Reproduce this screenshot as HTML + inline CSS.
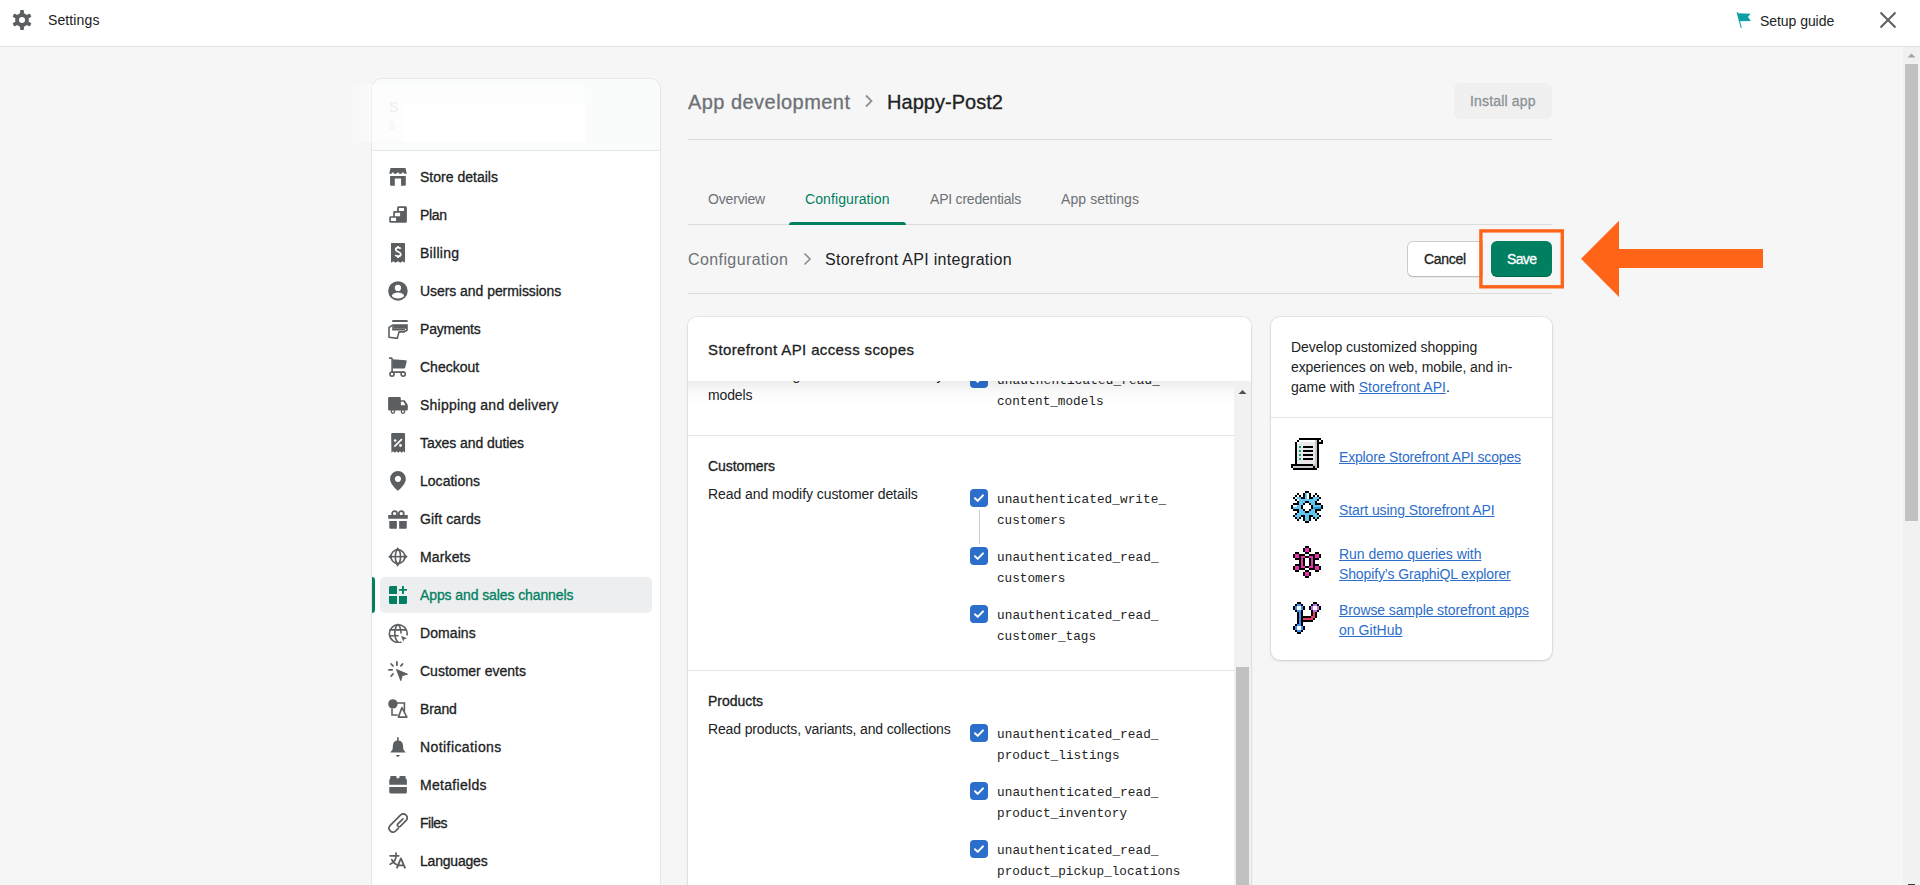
<!DOCTYPE html>
<html><head><meta charset="utf-8"><title>Settings</title>
<style>
html,body{margin:0;padding:0}
body{width:1920px;height:885px;overflow:hidden;position:relative;background:#f6f6f7;font-family:"Liberation Sans",sans-serif}
.t{position:absolute;white-space:nowrap}
svg{display:block}
</style></head><body>
<div style="position:absolute;left:0;top:0;width:1920px;height:46px;background:#fff;border-bottom:1px solid #e1e3e5"></div>
<svg style="position:absolute;left:12px;top:10px" width="20" height="20" viewBox="0 0 20 20"><g fill="#5c5f62"><circle cx="10" cy="10" r="6.9"/><rect x="8.1" y="0.1" width="3.8" height="5" rx="0.7" transform="rotate(0 10 10)"/><rect x="8.1" y="0.1" width="3.8" height="5" rx="0.7" transform="rotate(60 10 10)"/><rect x="8.1" y="0.1" width="3.8" height="5" rx="0.7" transform="rotate(120 10 10)"/><rect x="8.1" y="0.1" width="3.8" height="5" rx="0.7" transform="rotate(180 10 10)"/><rect x="8.1" y="0.1" width="3.8" height="5" rx="0.7" transform="rotate(240 10 10)"/><rect x="8.1" y="0.1" width="3.8" height="5" rx="0.7" transform="rotate(300 10 10)"/></g><circle cx="10" cy="10" r="3.05" fill="#fff"/></svg>
<div id="t1" class="t" style="left:48px;top:11.15px;font-size:14px;line-height:18px;color:#202223;font-weight:400;font-family:'Liberation Sans', sans-serif;letter-spacing:0.117px;">Settings</div>
<svg style="position:absolute;left:1736px;top:12px" width="16" height="17" viewBox="0 0 16 17"><path fill="#0e9ea8" d="M0.6 0.2h1.4l0.2 1 12.4 0.6-2.6 3.3 2.9 3.8-11 0.4 1.9 6.4H4.6z"/></svg>
<div id="t2" class="t" style="left:1760px;top:12.15px;font-size:14px;line-height:18px;color:#202223;font-weight:400;font-family:'Liberation Sans', sans-serif;letter-spacing:-0.054px;">Setup guide</div>
<svg style="position:absolute;left:1878px;top:10px" width="20" height="20" viewBox="0 0 20 20"><path stroke="#5c5f62" stroke-width="2" d="M2.5 2.5L17.5 17.5M17.5 2.5L2.5 17.5"/></svg>
<div style="position:absolute;left:1903px;top:47px;width:17px;height:838px;background:#f1f1f1"></div>
<svg style="position:absolute;left:1903px;top:47px" width="17" height="17"><path fill="#a3a3a3" d="M4.5 10.5h8l-4-4z"/></svg>
<div style="position:absolute;left:1905px;top:64px;width:13px;height:457px;background:#c1c1c1"></div>
<div style="position:absolute;left:1908px;top:884px;width:7px;height:1px;background:#3a3a3a"></div>
<div style="position:absolute;left:372px;top:79px;width:288px;height:900px;background:#fff;border-radius:10px;box-shadow:0 0 0 1px rgba(0,0,0,0.05),0 1px 2px rgba(0,0,0,0.07);overflow:hidden"><div style="position:absolute;left:0;top:0;width:288px;height:71px;background:#fafbfb;border-bottom:1px solid #e4e5e7"></div><div style="position:absolute;left:32px;top:25px;width:181px;height:38px;background:#fff"></div></div>
<div style="position:absolute;left:345px;top:84px;width:240px;height:58px;background:linear-gradient(90deg,rgba(255,255,255,0) 0,rgba(255,255,255,0.5) 30px,rgba(255,255,255,0.5) 100%)"></div>
<div id="t3" class="t" style="left:389px;top:97.65px;font-size:14px;line-height:18px;color:#eeeff0;font-weight:400;font-family:'Liberation Sans', sans-serif;">S</div>
<div id="t4" class="t" style="left:388.5px;top:120.03px;font-size:10px;line-height:12px;color:#f0f1f2;font-weight:400;font-family:'Liberation Sans', sans-serif;">S</div>
<div style="position:absolute;left:380px;top:577px;width:272px;height:36px;background:#edeeef;border-radius:5px"></div>
<div style="position:absolute;left:372px;top:577px;width:3px;height:36px;background:#008060;border-radius:0 3px 3px 0"></div>
<svg style="position:absolute;left:388px;top:167px" width="20" height="20" viewBox="0 0 20 20" ><path fill="#5c5f62" d="M2.5 1H17.5L18.75 6.8H16.15A1.2 1.2 0 0 0 13.75 6.8H11.1A1.2 1.2 0 0 0 8.7 6.8H6.1A1.2 1.2 0 0 0 3.7 6.8H1.25Z"/><path fill="#5c5f62" d="M2.07 9H17.8V17.75A1 1 0 0 1 16.8 18.75H13.05V11.56H6.8V18.75H3.07A1 1 0 0 1 2.07 17.75Z"/></svg>
<div id="t5" class="t" style="left:420px;top:168.15px;font-size:14px;line-height:18px;color:#202223;font-weight:400;font-family:'Liberation Sans', sans-serif;letter-spacing:0.014px;-webkit-text-stroke:0.3px currentColor;">Store details</div>
<svg style="position:absolute;left:388px;top:205px" width="20" height="20" viewBox="0 0 20 20" ><path fill="#5c5f62" fill-rule="evenodd" d="M2.7 11.2H5.2V7.5Q5.2 6.1 6.6 6.1H9.1V2.7Q9.1 1.25 10.5 1.25H17.4Q18.9 1.25 18.9 2.7V16.2Q18.9 17.7 17.4 17.7H2.7Q1.25 17.7 1.25 16.2V12.6Q1.25 11.2 2.7 11.2Z M10.9 2.9H16V6.1H10.9Z M6.9 7.8H12.1V11.2H6.9Z M2.9 12.8H8V16H2.9Z"/></svg>
<div id="t6" class="t" style="left:420px;top:206.15px;font-size:14px;line-height:18px;color:#202223;font-weight:400;font-family:'Liberation Sans', sans-serif;letter-spacing:-0.345px;-webkit-text-stroke:0.3px currentColor;">Plan</div>
<svg style="position:absolute;left:388px;top:243px" width="20" height="20" viewBox="0 0 20 20" ><path fill="#5c5f62" d="M3 0.5a0.6 0.6 0 0 1 0.6-0.5h12.8a0.6 0.6 0 0 1 0.6 0.5v19.3l-2.3-1.6-2.3 1.6-2.4-1.6-2.4 1.6-2.3-1.6L3 19.8z"/><path fill="none" stroke="#fff" stroke-width="1.8" d="M12.7 5.8C12.1 5 11.3 4.7 10.1 4.7 8.6 4.7 7.7 5.5 7.7 6.6 7.7 9.2 12.8 8.3 12.8 11.2 12.8 12.4 11.7 13.2 10.1 13.2 8.9 13.2 7.9 12.8 7.3 12M10.1 3V4.7M10.1 13.2V15"/></svg>
<div id="t7" class="t" style="left:420px;top:244.15px;font-size:14px;line-height:18px;color:#202223;font-weight:400;font-family:'Liberation Sans', sans-serif;letter-spacing:0.273px;-webkit-text-stroke:0.3px currentColor;">Billing</div>
<svg style="position:absolute;left:388px;top:281px" width="20" height="20" viewBox="0 0 20 20" ><circle cx="9.93" cy="9.93" r="9.76" fill="#5c5f62"/><circle cx="9.93" cy="6.95" r="3.1" fill="#fff"/><ellipse cx="9.93" cy="14.5" rx="6" ry="3" fill="#fff"/></svg>
<div id="t8" class="t" style="left:420px;top:282.15px;font-size:14px;line-height:18px;color:#202223;font-weight:400;font-family:'Liberation Sans', sans-serif;letter-spacing:-0.054px;-webkit-text-stroke:0.3px currentColor;">Users and permissions</div>
<svg style="position:absolute;left:388px;top:319px" width="20" height="20" viewBox="0 0 20 20" ><path fill="#5c5f62" d="M4.6 1.1h14.6l0.6 0.8v1H4.1v-1z"/><path fill="#5c5f62" d="M4.1 5.2H19.8V11.6L18.2 12.4V9.7H5.8V6.6z"/><path fill="none" stroke="#5c5f62" stroke-width="1.6" stroke-linejoin="round" d="M5 6L1 8.4V18.3L9.3 19.4L11 12.9H16.3L19 11"/><path fill="none" stroke="#5c5f62" stroke-width="1.6" d="M5 6V10.6H17"/></svg>
<div id="t9" class="t" style="left:420px;top:320.15px;font-size:14px;line-height:18px;color:#202223;font-weight:400;font-family:'Liberation Sans', sans-serif;letter-spacing:-0.208px;-webkit-text-stroke:0.3px currentColor;">Payments</div>
<svg style="position:absolute;left:388px;top:357px" width="20" height="20" viewBox="0 0 20 20" ><path fill="none" stroke="#5c5f62" stroke-width="1.6" stroke-linecap="round" d="M1.6 1.1H3.3a0.8 0.8 0 0 1 0.8 0.8V15.1H16"/><path fill="#5c5f62" d="M4.5 2.2L17.8 3.2a1 1 0 0 1 0.9 1.2L17.2 10.6a1.2 1.2 0 0 1-1.2 1H4.5z"/><circle cx="4" cy="17.1" r="2.1" fill="none" stroke="#5c5f62" stroke-width="1.6"/><circle cx="15.2" cy="17.1" r="2.1" fill="none" stroke="#5c5f62" stroke-width="1.6"/></svg>
<div id="t10" class="t" style="left:420px;top:358.15px;font-size:14px;line-height:18px;color:#202223;font-weight:400;font-family:'Liberation Sans', sans-serif;letter-spacing:0.007px;-webkit-text-stroke:0.3px currentColor;">Checkout</div>
<svg style="position:absolute;left:388px;top:395px" width="20" height="20" viewBox="0 0 20 20" ><path fill="#5c5f62" fill-rule="evenodd" d="M1.2 2.1H11.7a1.1 1.1 0 0 1 1.1 1.1V5.3H16.7L19.8 9.9V14.5a1.1 1.1 0 0 1-1.1 1.1H1.2a1.1 1.1 0 0 1-1.1-1.1V3.2a1.1 1.1 0 0 1 1.1-1.1z M12.9 6.7V10.2H17.3L15.6 6.7z"/><circle cx="4.9" cy="16.6" r="2.3" fill="#5c5f62" stroke="#fff" stroke-width="0"/><circle cx="4.9" cy="16.6" r="1" fill="#fff"/><circle cx="14.95" cy="16.6" r="2.3" fill="#5c5f62"/><circle cx="14.95" cy="16.6" r="1" fill="#fff"/></svg>
<div id="t11" class="t" style="left:420px;top:396.15px;font-size:14px;line-height:18px;color:#202223;font-weight:400;font-family:'Liberation Sans', sans-serif;letter-spacing:0.221px;-webkit-text-stroke:0.3px currentColor;">Shipping and delivery</div>
<svg style="position:absolute;left:388px;top:433px" width="20" height="20" viewBox="0 0 20 20" ><path fill="#5c5f62" d="M3.15 1.2a1.2 1.2 0 0 1 1.2-1.2h11.5a1.2 1.2 0 0 1 1.2 1.2V19.7l-1.7-1.5-1.7 1.5-1.7-1.5-1.7 1.5-1.7-1.5-1.7 1.5-1.7-1.5-1.7 1.5z"/><circle cx="7.2" cy="7.5" r="1.3" fill="#fff"/><circle cx="12.5" cy="12.5" r="1.4" fill="#fff"/><path stroke="#fff" stroke-width="1.7" stroke-linecap="square" d="M6.9 13.1L13.3 6.8"/></svg>
<div id="t12" class="t" style="left:420px;top:434.15px;font-size:14px;line-height:18px;color:#202223;font-weight:400;font-family:'Liberation Sans', sans-serif;letter-spacing:-0.071px;-webkit-text-stroke:0.3px currentColor;">Taxes and duties</div>
<svg style="position:absolute;left:388px;top:471px" width="20" height="20" viewBox="0 0 20 20" ><path fill="#5c5f62" fill-rule="evenodd" d="M9.93 0.05a7.85 7.85 0 0 1 7.85 7.85c0 4.3-4.6 9.1-7.85 11.8C6.7 17 2.08 12.2 2.08 7.9A7.85 7.85 0 0 1 9.93 0.05z M9.93 4.8a3.1 3.1 0 1 0 0.01 0z"/></svg>
<div id="t13" class="t" style="left:420px;top:472.15px;font-size:14px;line-height:18px;color:#202223;font-weight:400;font-family:'Liberation Sans', sans-serif;letter-spacing:0.020px;-webkit-text-stroke:0.3px currentColor;">Locations</div>
<svg style="position:absolute;left:388px;top:509px" width="20" height="20" viewBox="0 0 20 20" ><path fill="#5c5f62" d="M0.7 6.1H19.3a0.5 0.5 0 0 1 0.5 0.5V9.8H0.2V6.6a0.5 0.5 0 0 1 0.5-0.5z"/><circle cx="6.6" cy="4.6" r="2.5" fill="none" stroke="#5c5f62" stroke-width="1.7"/><circle cx="13.3" cy="4.6" r="2.5" fill="none" stroke="#5c5f62" stroke-width="1.7"/><path fill="#5c5f62" d="M1.25 12.1H8.85V19.7H2.3a1 1 0 0 1-1-1z M11.15 12.1H18.75V18.7a1 1 0 0 1-1 1H11.15z"/></svg>
<div id="t14" class="t" style="left:420px;top:510.15px;font-size:14px;line-height:18px;color:#202223;font-weight:400;font-family:'Liberation Sans', sans-serif;letter-spacing:0.098px;-webkit-text-stroke:0.3px currentColor;">Gift cards</div>
<svg style="position:absolute;left:388px;top:547px" width="20" height="20" viewBox="0 0 20 20" ><circle cx="9.93" cy="9.66" r="6.9" fill="none" stroke="#5c5f62" stroke-width="1.6"/><ellipse cx="9.93" cy="9.66" rx="2.6" ry="6.9" fill="none" stroke="#5c5f62" stroke-width="1.6"/><path stroke="#5c5f62" stroke-width="1.6" d="M2 9.66H18"/><path fill="#5c5f62" d="M9.66 0.2L12.2 3.3H7.1z M9.66 19.7L12.2 16H7.1z M0.17 9.66L3.3 7.1V12.2z M19.7 9.66L16.6 7.1V12.2z"/></svg>
<div id="t15" class="t" style="left:420px;top:548.15px;font-size:14px;line-height:18px;color:#202223;font-weight:400;font-family:'Liberation Sans', sans-serif;letter-spacing:0.134px;-webkit-text-stroke:0.3px currentColor;">Markets</div>
<svg style="position:absolute;left:388px;top:585px" width="20" height="20" viewBox="0 0 20 20" ><path fill="#008060" d="M2.5 1H9V9H1V2.5A1.5 1.5 0 0 1 2.5 1z M1 11H9V18.9H2.5A1.5 1.5 0 0 1 1 17.4z M11 11H19V17.4A1.5 1.5 0 0 1 17.5 18.9H11z"/><path stroke="#008060" stroke-width="1.9" d="M14.95 1V8.9M11 4.9H19"/></svg>
<div id="t16" class="t" style="left:420px;top:586.15px;font-size:14px;line-height:18px;color:#008060;font-weight:400;font-family:'Liberation Sans', sans-serif;letter-spacing:-0.098px;-webkit-text-stroke:0.3px currentColor;">Apps and sales channels</div>
<svg style="position:absolute;left:388px;top:623px" width="20" height="20" viewBox="0 0 20 20" ><path fill="none" stroke="#5c5f62" stroke-width="1.6" d="M13.4 19A8.9 8.9 0 1 1 19 12.4"/><path fill="none" stroke="#5c5f62" stroke-width="1.6" d="M9.9 1.1C7.6 3.3 6.8 6.8 6.8 10S7.5 16.8 9.9 18.8 M9.9 1.1C12.3 3.3 13 6.4 13 10.3V10.6"/><path stroke="#5c5f62" stroke-width="1.6" d="M1.5 6.9H18.3M1.5 12.8H10.6"/><path fill="#5c5f62" d="M13.05 12.8L19 15.35 15.8 16.4 15.35 18.9z"/></svg>
<div id="t17" class="t" style="left:420px;top:624.15px;font-size:14px;line-height:18px;color:#202223;font-weight:400;font-family:'Liberation Sans', sans-serif;letter-spacing:0.074px;-webkit-text-stroke:0.3px currentColor;">Domains</div>
<svg style="position:absolute;left:388px;top:661px" width="20" height="20" viewBox="0 0 20 20" ><path stroke="#5c5f62" stroke-width="1.8" stroke-linecap="round" d="M8.85 0.9V4.2M3.2 3L5 4.9M14.6 3L12.9 4.9M0.9 8.85H4.2M3.2 15L5 13"/><path fill="#5c5f62" stroke="#5c5f62" stroke-width="1" stroke-linejoin="round" d="M8.5 8.5L19.5 13.2L14.2 14.6L12.8 19.6z"/></svg>
<div id="t18" class="t" style="left:420px;top:662.15px;font-size:14px;line-height:18px;color:#202223;font-weight:400;font-family:'Liberation Sans', sans-serif;letter-spacing:0.012px;-webkit-text-stroke:0.3px currentColor;">Customer events</div>
<svg style="position:absolute;left:388px;top:699px" width="20" height="20" viewBox="0 0 20 20" ><path fill="none" stroke="#5c5f62" stroke-width="1.6" d="M5 4H16.4V12.5M4 9.5V16H9.8"/><circle cx="4.9" cy="4.9" r="4.7" fill="#5c5f62"/><path fill="none" stroke="#5c5f62" stroke-width="1.6" stroke-linejoin="round" d="M13.9 8.6L10.4 18.1H18.9z"/></svg>
<div id="t19" class="t" style="left:420px;top:700.15px;font-size:14px;line-height:18px;color:#202223;font-weight:400;font-family:'Liberation Sans', sans-serif;letter-spacing:-0.115px;-webkit-text-stroke:0.3px currentColor;">Brand</div>
<svg style="position:absolute;left:388px;top:737px" width="20" height="20" viewBox="0 0 20 20" ><path fill="#5c5f62" d="M9.1 0.2H10.7V3.4C13.4 3.8 14.9 5.6 15 8.2L15.3 12.2 17.6 15.4H2.3L4.6 12.2 4.9 8.2C5 5.6 6.5 3.8 9.1 3.4z"/><path fill="#5c5f62" d="M8 17.9H11.8C11.5 19 10.8 19.7 9.9 19.7S8.3 19 8 17.9z"/></svg>
<div id="t20" class="t" style="left:420px;top:738.15px;font-size:14px;line-height:18px;color:#202223;font-weight:400;font-family:'Liberation Sans', sans-serif;letter-spacing:0.421px;-webkit-text-stroke:0.3px currentColor;">Notifications</div>
<svg style="position:absolute;left:388px;top:775px" width="20" height="20" viewBox="0 0 20 20" ><path fill="#5c5f62" d="M3.2 1.1H7.6a1 1 0 0 1 1 1V3.3H11.3V2.1a1 1 0 0 1 1-1H16.7a1 1 0 0 1 1 1V4h0.2a1 1 0 0 1 1 1V9.8H1.25V5a1 1 0 0 1 1-1H2.2V2.1a1 1 0 0 1 1-1z"/><path fill="#5c5f62" d="M1.25 12.1H18.9V17.1a1.5 1.5 0 0 1-1.5 1.5H2.75a1.5 1.5 0 0 1-1.5-1.5z"/></svg>
<div id="t21" class="t" style="left:420px;top:776.15px;font-size:14px;line-height:18px;color:#202223;font-weight:400;font-family:'Liberation Sans', sans-serif;letter-spacing:0.298px;-webkit-text-stroke:0.3px currentColor;">Metafields</div>
<svg style="position:absolute;left:388px;top:813px" width="20" height="20" viewBox="0 0 20 20" ><path fill="none" stroke="#5c5f62" stroke-width="1.7" stroke-linecap="round" d="M10.3 15.35L7.5 18.1A3.9 3.9 0 0 1 2 12.6L12.7 1.9A3.9 3.9 0 0 1 18.2 7.4L12.3 13.3A1.7 1.7 0 0 1 9.9 10.9L14.9 5.9"/></svg>
<div id="t22" class="t" style="left:420px;top:814.15px;font-size:14px;line-height:18px;color:#202223;font-weight:400;font-family:'Liberation Sans', sans-serif;letter-spacing:-0.491px;-webkit-text-stroke:0.3px currentColor;">Files</div>
<svg style="position:absolute;left:388px;top:851px" width="20" height="20" viewBox="0 0 20 20" ><path fill="none" stroke="#5c5f62" stroke-width="1.7" stroke-linecap="round" d="M2.1 4.8H10.7M8 2.1V4.8C8 8.5 6.5 11.5 2.1 13.2M3.8 8.6C5 11.5 7.5 13.5 10.9 14.3"/><path fill="none" stroke="#5c5f62" stroke-width="1.8" stroke-linejoin="round" d="M8.7 17.4L12.9 7.4 17.2 17.4M10.2 14.4H15.8"/></svg>
<div id="t23" class="t" style="left:420px;top:852.15px;font-size:14px;line-height:18px;color:#202223;font-weight:400;font-family:'Liberation Sans', sans-serif;letter-spacing:-0.199px;-webkit-text-stroke:0.3px currentColor;">Languages</div>
<div id="t24" class="t" style="left:688px;top:89.57px;font-size:20px;line-height:25px;color:#6d7175;font-weight:400;font-family:'Liberation Sans', sans-serif;letter-spacing:0.452px;-webkit-text-stroke:0.3px currentColor;">App development</div>
<svg style="position:absolute;left:862px;top:93px" width="14" height="16" viewBox="0 0 14 16"><path fill="none" stroke="#8c9196" stroke-width="1.8" d="M4 2.5L9.5 8 4 13.5"/></svg>
<div id="t25" class="t" style="left:887px;top:89.57px;font-size:20px;line-height:25px;color:#202223;font-weight:400;font-family:'Liberation Sans', sans-serif;letter-spacing:0.038px;-webkit-text-stroke:0.3px currentColor;">Happy-Post2</div>
<div style="position:absolute;left:1454px;top:83px;width:98px;height:36px;background:#f0f0f0;border-radius:6px"></div>
<div id="t26" class="t" style="left:1470px;top:92.15px;font-size:14px;line-height:18px;color:#8c9196;font-weight:400;font-family:'Liberation Sans', sans-serif;letter-spacing:0.167px;-webkit-text-stroke:0.3px currentColor;">Install app</div>
<div style="position:absolute;left:688px;top:139px;width:864px;height:1px;background:#dcdcdc"></div>
<div id="t27" class="t" style="left:708px;top:189.85px;font-size:14px;line-height:18px;color:#6d7175;font-weight:400;font-family:'Liberation Sans', sans-serif;letter-spacing:-0.166px;">Overview</div>
<div id="t28" class="t" style="left:805px;top:189.85px;font-size:14px;line-height:18px;color:#008060;font-weight:400;font-family:'Liberation Sans', sans-serif;letter-spacing:0.101px;">Configuration</div>
<div id="t29" class="t" style="left:930px;top:189.85px;font-size:14px;line-height:18px;color:#6d7175;font-weight:400;font-family:'Liberation Sans', sans-serif;letter-spacing:-0.212px;">API credentials</div>
<div id="t30" class="t" style="left:1061px;top:189.85px;font-size:14px;line-height:18px;color:#6d7175;font-weight:400;font-family:'Liberation Sans', sans-serif;letter-spacing:0.086px;">App settings</div>
<div style="position:absolute;left:688px;top:224px;width:864px;height:1px;background:#dcdcdc"></div>
<div style="position:absolute;left:789px;top:222px;width:117px;height:3px;background:#008060;border-radius:3px 3px 0 0"></div>
<div id="t31" class="t" style="left:688px;top:249.65px;font-size:16px;line-height:20px;color:#6d7175;font-weight:400;font-family:'Liberation Sans', sans-serif;letter-spacing:0.401px;">Configuration</div>
<svg style="position:absolute;left:801px;top:251px" width="14" height="16" viewBox="0 0 14 16"><path fill="none" stroke="#8c9196" stroke-width="1.7" d="M3.5 2.5L9 8 3.5 13.5"/></svg>
<div id="t32" class="t" style="left:825px;top:249.65px;font-size:16px;line-height:20px;color:#202223;font-weight:400;font-family:'Liberation Sans', sans-serif;letter-spacing:0.313px;">Storefront API integration</div>
<div style="position:absolute;left:688px;top:293px;width:864px;height:1px;background:#dcdcdc"></div>
<div style="position:absolute;left:1407px;top:241px;width:76px;height:36px;box-sizing:border-box;background:#fff;border:1px solid #c9cccf;border-bottom-color:#babfc3;border-radius:6px 2px 2px 6px;box-shadow:0 1px 0 rgba(0,0,0,0.05)"></div>
<div id="t33" class="t" style="left:1424px;top:250.35px;font-size:14px;line-height:18px;color:#202223;font-weight:400;font-family:'Liberation Sans', sans-serif;letter-spacing:-0.317px;-webkit-text-stroke:0.3px currentColor;">Cancel</div>
<div style="position:absolute;left:1491px;top:241px;width:61px;height:36px;background:#008060;border-radius:6px;box-shadow:inset 0 -1px 0 rgba(0,0,0,0.2)"></div>
<div id="t34" class="t" style="left:1507px;top:250.35px;font-size:14px;line-height:18px;color:#fff;font-weight:400;font-family:'Liberation Sans', sans-serif;letter-spacing:-0.640px;-webkit-text-stroke:0.3px currentColor;">Save</div>
<svg style="position:absolute;left:1470px;top:220px" width="110" height="80"><rect x="10.9" y="10.9" width="81.4" height="55.9" fill="none" stroke="#ff6418" stroke-width="3.4"/></svg>
<svg style="position:absolute;left:1575px;top:215px" width="200" height="90"><path fill="#ff6418" d="M6 43.8L44 5.8V34H188V53H44V82z"/></svg>
<div style="position:absolute;left:688px;top:317px;width:563px;height:700px;background:#fff;border-radius:9px;box-shadow:0 0 0 1px rgba(0,0,0,0.06),0 1px 3px rgba(0,0,0,0.1);overflow:hidden"></div>
<div style="position:absolute;left:970px;top:370px;width:18px;height:18px;background:#2c6ecb;border-radius:4px"><svg width="18" height="18" viewBox="0 0 18 18" style="position:absolute;left:0;top:0"><path fill="none" stroke="#fff" stroke-width="2" stroke-linecap="round" stroke-linejoin="round" d="M5 9.2l2.7 2.7L13 6.4"/></svg></div>
<div id="t35" class="t" style="left:997px;top:372.62px;font-size:12.7px;line-height:16px;color:#202223;font-weight:400;font-family:'Liberation Mono', monospace;letter-spacing:0.155px;">unauthenticated_read_</div>
<div id="t36" class="t" style="left:997px;top:393.92px;font-size:12.7px;line-height:16px;color:#202223;font-weight:400;font-family:'Liberation Mono', monospace;letter-spacing:-0.007px;">content_models</div>
<div id="t37" class="t" style="left:792.5px;top:366.45px;font-size:14px;line-height:18px;color:#202223;font-weight:400;font-family:'Liberation Sans', sans-serif;">g</div>
<div id="t38" class="t" style="left:936.5px;top:366.45px;font-size:14px;line-height:18px;color:#202223;font-weight:400;font-family:'Liberation Sans', sans-serif;">y</div>
<div id="t39" class="t" style="left:708px;top:386.45px;font-size:14px;line-height:18px;color:#202223;font-weight:400;font-family:'Liberation Sans', sans-serif;letter-spacing:-0.128px;">models</div>
<div style="position:absolute;left:688px;top:435px;width:546px;height:1px;background:#e1e3e5"></div>
<div id="t40" class="t" style="left:708px;top:457.15px;font-size:14px;line-height:18px;color:#202223;font-weight:400;font-family:'Liberation Sans', sans-serif;letter-spacing:-0.087px;-webkit-text-stroke:0.3px currentColor;">Customers</div>
<div id="t41" class="t" style="left:708px;top:484.85px;font-size:14px;line-height:18px;color:#202223;font-weight:400;font-family:'Liberation Sans', sans-serif;letter-spacing:-0.061px;">Read and modify customer details</div>
<div style="position:absolute;left:970px;top:489px;width:18px;height:18px;background:#2c6ecb;border-radius:4px"><svg width="18" height="18" viewBox="0 0 18 18" style="position:absolute;left:0;top:0"><path fill="none" stroke="#fff" stroke-width="2" stroke-linecap="round" stroke-linejoin="round" d="M5 9.2l2.7 2.7L13 6.4"/></svg></div>
<div id="t42" class="t" style="left:997px;top:491.62px;font-size:12.7px;line-height:16px;color:#202223;font-weight:400;font-family:'Liberation Mono', monospace;letter-spacing:0.071px;">unauthenticated_write_</div>
<div id="t43" class="t" style="left:997px;top:512.92px;font-size:12.7px;line-height:16px;color:#202223;font-weight:400;font-family:'Liberation Mono', monospace;letter-spacing:-0.004px;">customers</div>
<div style="position:absolute;left:970px;top:547px;width:18px;height:18px;background:#2c6ecb;border-radius:4px"><svg width="18" height="18" viewBox="0 0 18 18" style="position:absolute;left:0;top:0"><path fill="none" stroke="#fff" stroke-width="2" stroke-linecap="round" stroke-linejoin="round" d="M5 9.2l2.7 2.7L13 6.4"/></svg></div>
<div id="t44" class="t" style="left:997px;top:549.62px;font-size:12.7px;line-height:16px;color:#202223;font-weight:400;font-family:'Liberation Mono', monospace;letter-spacing:0.081px;">unauthenticated_read_</div>
<div id="t45" class="t" style="left:997px;top:570.92px;font-size:12.7px;line-height:16px;color:#202223;font-weight:400;font-family:'Liberation Mono', monospace;letter-spacing:-0.005px;">customers</div>
<div style="position:absolute;left:970px;top:605px;width:18px;height:18px;background:#2c6ecb;border-radius:4px"><svg width="18" height="18" viewBox="0 0 18 18" style="position:absolute;left:0;top:0"><path fill="none" stroke="#fff" stroke-width="2" stroke-linecap="round" stroke-linejoin="round" d="M5 9.2l2.7 2.7L13 6.4"/></svg></div>
<div id="t46" class="t" style="left:997px;top:607.62px;font-size:12.7px;line-height:16px;color:#202223;font-weight:400;font-family:'Liberation Mono', monospace;letter-spacing:0.080px;">unauthenticated_read_</div>
<div id="t47" class="t" style="left:997px;top:628.92px;font-size:12.7px;line-height:16px;color:#202223;font-weight:400;font-family:'Liberation Mono', monospace;letter-spacing:0.002px;">customer_tags</div>
<div style="position:absolute;left:979px;top:510px;width:1px;height:34px;background:#c9cccf"></div>
<div style="position:absolute;left:688px;top:670px;width:546px;height:1px;background:#e1e3e5"></div>
<div id="t48" class="t" style="left:708px;top:692.15px;font-size:14px;line-height:18px;color:#202223;font-weight:400;font-family:'Liberation Sans', sans-serif;letter-spacing:-0.037px;-webkit-text-stroke:0.3px currentColor;">Products</div>
<div id="t49" class="t" style="left:708px;top:720.35px;font-size:14px;line-height:18px;color:#202223;font-weight:400;font-family:'Liberation Sans', sans-serif;letter-spacing:-0.142px;">Read products, variants, and collections</div>
<div style="position:absolute;left:970px;top:724px;width:18px;height:18px;background:#2c6ecb;border-radius:4px"><svg width="18" height="18" viewBox="0 0 18 18" style="position:absolute;left:0;top:0"><path fill="none" stroke="#fff" stroke-width="2" stroke-linecap="round" stroke-linejoin="round" d="M5 9.2l2.7 2.7L13 6.4"/></svg></div>
<div id="t50" class="t" style="left:997px;top:726.62px;font-size:12.7px;line-height:16px;color:#202223;font-weight:400;font-family:'Liberation Mono', monospace;letter-spacing:0.080px;">unauthenticated_read_</div>
<div id="t51" class="t" style="left:997px;top:747.92px;font-size:12.7px;line-height:16px;color:#202223;font-weight:400;font-family:'Liberation Mono', monospace;letter-spacing:0.045px;">product_listings</div>
<div style="position:absolute;left:970px;top:782px;width:18px;height:18px;background:#2c6ecb;border-radius:4px"><svg width="18" height="18" viewBox="0 0 18 18" style="position:absolute;left:0;top:0"><path fill="none" stroke="#fff" stroke-width="2" stroke-linecap="round" stroke-linejoin="round" d="M5 9.2l2.7 2.7L13 6.4"/></svg></div>
<div id="t52" class="t" style="left:997px;top:784.62px;font-size:12.7px;line-height:16px;color:#202223;font-weight:400;font-family:'Liberation Mono', monospace;letter-spacing:0.080px;">unauthenticated_read_</div>
<div id="t53" class="t" style="left:997px;top:805.92px;font-size:12.7px;line-height:16px;color:#202223;font-weight:400;font-family:'Liberation Mono', monospace;letter-spacing:0.035px;">product_inventory</div>
<div style="position:absolute;left:970px;top:840px;width:18px;height:18px;background:#2c6ecb;border-radius:4px"><svg width="18" height="18" viewBox="0 0 18 18" style="position:absolute;left:0;top:0"><path fill="none" stroke="#fff" stroke-width="2" stroke-linecap="round" stroke-linejoin="round" d="M5 9.2l2.7 2.7L13 6.4"/></svg></div>
<div id="t54" class="t" style="left:997px;top:842.62px;font-size:12.7px;line-height:16px;color:#202223;font-weight:400;font-family:'Liberation Mono', monospace;letter-spacing:0.080px;">unauthenticated_read_</div>
<div id="t55" class="t" style="left:997px;top:863.92px;font-size:12.7px;line-height:16px;color:#202223;font-weight:400;font-family:'Liberation Mono', monospace;letter-spacing:0.033px;">product_pickup_locations</div>
<div style="position:absolute;left:688px;top:317px;width:563px;height:64px;background:#fff;border-radius:9px 9px 0 0"></div>
<div style="position:absolute;left:688px;top:381px;width:563px;height:24px;background:linear-gradient(rgba(0,0,0,0.075),rgba(0,0,0,0.025) 40%,rgba(0,0,0,0))"></div>
<div id="t56" class="t" style="left:708px;top:339.90px;font-size:15px;line-height:19px;color:#202223;font-weight:400;font-family:'Liberation Sans', sans-serif;letter-spacing:0.372px;-webkit-text-stroke:0.3px currentColor;">Storefront API access scopes</div>
<div style="position:absolute;left:1234px;top:381px;width:17px;height:504px;background:#f1f1f1"></div>
<svg style="position:absolute;left:1234px;top:381px" width="17" height="17"><path fill="#505050" d="M4.5 13h8l-4-4z"/></svg>
<div style="position:absolute;left:1236px;top:667px;width:13px;height:230px;background:#c1c1c1"></div>
<div style="position:absolute;left:1271px;top:317px;width:281px;height:343px;background:#fff;border-radius:9px;box-shadow:0 0 0 1px rgba(0,0,0,0.06),0 1px 3px rgba(0,0,0,0.12)"></div>
<div id="t57" class="t" style="left:1291px;top:337.85px;font-size:14px;line-height:18px;color:#202223;font-weight:400;font-family:'Liberation Sans', sans-serif;letter-spacing:-0.022px;">Develop customized shopping</div>
<div id="t58" class="t" style="left:1291px;top:357.65px;font-size:14px;line-height:18px;color:#202223;font-weight:400;font-family:'Liberation Sans', sans-serif;letter-spacing:-0.081px;">experiences on web, mobile, and in-</div>
<div id="t59" class="t" style="left:1291px;top:377.75px;font-size:14px;line-height:18px;color:#202223;font-weight:400;font-family:'Liberation Sans', sans-serif;">game with <span style="color:#2c6ecb;text-decoration:underline">Storefront API</span>.</div>
<div style="position:absolute;left:1271px;top:417px;width:281px;height:1px;background:#e1e3e5"></div>
<svg style="position:absolute;left:1291px;top:438px" width="32" height="32" shape-rendering="crispEdges"><rect x="8" y="0" width="22" height="2" fill="#000"/><rect x="6" y="2" width="2" height="2" fill="#000"/><rect x="8" y="2" width="16" height="2" fill="#fff"/><rect x="24" y="2" width="2" height="2" fill="#c4c8cc"/><rect x="26" y="2" width="2" height="2" fill="#000"/><rect x="28" y="2" width="2" height="2" fill="#e6e8ea"/><rect x="30" y="2" width="2" height="2" fill="#000"/><rect x="4" y="4" width="2" height="2" fill="#000"/><rect x="6" y="4" width="2" height="2" fill="#fff"/><rect x="8" y="4" width="16" height="2" fill="#e6e8ea"/><rect x="24" y="4" width="2" height="2" fill="#c4c8cc"/><rect x="26" y="4" width="6" height="2" fill="#000"/><rect x="4" y="6" width="2" height="2" fill="#000"/><rect x="6" y="6" width="18" height="2" fill="#e6e8ea"/><rect x="24" y="6" width="2" height="2" fill="#c4c8cc"/><rect x="26" y="6" width="2" height="2" fill="#000"/><rect x="4" y="8" width="2" height="2" fill="#000"/><rect x="6" y="8" width="2" height="2" fill="#e6e8ea"/><rect x="8" y="8" width="2" height="2" fill="#00a47c"/><rect x="10" y="8" width="2" height="2" fill="#e6e8ea"/><rect x="12" y="8" width="10" height="2" fill="#000"/><rect x="22" y="8" width="2" height="2" fill="#e6e8ea"/><rect x="24" y="8" width="2" height="2" fill="#c4c8cc"/><rect x="26" y="8" width="2" height="2" fill="#000"/><rect x="4" y="10" width="2" height="2" fill="#000"/><rect x="6" y="10" width="18" height="2" fill="#e6e8ea"/><rect x="24" y="10" width="2" height="2" fill="#c4c8cc"/><rect x="26" y="10" width="2" height="2" fill="#000"/><rect x="4" y="12" width="2" height="2" fill="#000"/><rect x="6" y="12" width="2" height="2" fill="#e6e8ea"/><rect x="8" y="12" width="2" height="2" fill="#00a47c"/><rect x="10" y="12" width="2" height="2" fill="#e6e8ea"/><rect x="12" y="12" width="10" height="2" fill="#000"/><rect x="22" y="12" width="2" height="2" fill="#e6e8ea"/><rect x="24" y="12" width="2" height="2" fill="#c4c8cc"/><rect x="26" y="12" width="2" height="2" fill="#000"/><rect x="4" y="14" width="2" height="2" fill="#000"/><rect x="6" y="14" width="18" height="2" fill="#e6e8ea"/><rect x="24" y="14" width="2" height="2" fill="#c4c8cc"/><rect x="26" y="14" width="2" height="2" fill="#000"/><rect x="4" y="16" width="2" height="2" fill="#000"/><rect x="6" y="16" width="2" height="2" fill="#e6e8ea"/><rect x="8" y="16" width="2" height="2" fill="#00a47c"/><rect x="10" y="16" width="2" height="2" fill="#e6e8ea"/><rect x="12" y="16" width="10" height="2" fill="#000"/><rect x="22" y="16" width="2" height="2" fill="#e6e8ea"/><rect x="24" y="16" width="2" height="2" fill="#c4c8cc"/><rect x="26" y="16" width="2" height="2" fill="#000"/><rect x="4" y="18" width="2" height="2" fill="#000"/><rect x="6" y="18" width="18" height="2" fill="#e6e8ea"/><rect x="24" y="18" width="2" height="2" fill="#c4c8cc"/><rect x="26" y="18" width="2" height="2" fill="#000"/><rect x="4" y="20" width="2" height="2" fill="#000"/><rect x="6" y="20" width="2" height="2" fill="#e6e8ea"/><rect x="8" y="20" width="2" height="2" fill="#00a47c"/><rect x="10" y="20" width="2" height="2" fill="#e6e8ea"/><rect x="12" y="20" width="10" height="2" fill="#000"/><rect x="22" y="20" width="2" height="2" fill="#e6e8ea"/><rect x="24" y="20" width="2" height="2" fill="#c4c8cc"/><rect x="26" y="20" width="2" height="2" fill="#000"/><rect x="4" y="22" width="2" height="2" fill="#000"/><rect x="6" y="22" width="18" height="2" fill="#e6e8ea"/><rect x="24" y="22" width="2" height="2" fill="#c4c8cc"/><rect x="26" y="22" width="2" height="2" fill="#000"/><rect x="4" y="24" width="2" height="2" fill="#000"/><rect x="6" y="24" width="18" height="2" fill="#e6e8ea"/><rect x="24" y="24" width="2" height="2" fill="#c4c8cc"/><rect x="26" y="24" width="2" height="2" fill="#000"/><rect x="0" y="26" width="22" height="2" fill="#000"/><rect x="22" y="26" width="4" height="2" fill="#c4c8cc"/><rect x="26" y="26" width="2" height="2" fill="#000"/><rect x="0" y="28" width="2" height="2" fill="#000"/><rect x="2" y="28" width="20" height="2" fill="#c4c8cc"/><rect x="22" y="28" width="2" height="2" fill="#000"/><rect x="24" y="28" width="2" height="2" fill="#c4c8cc"/><rect x="26" y="28" width="2" height="2" fill="#000"/><rect x="2" y="30" width="24" height="2" fill="#000"/></svg>
<svg style="position:absolute;left:1291px;top:491px" width="32" height="32" shape-rendering="crispEdges"><rect x="14" y="0" width="4" height="2" fill="#000"/><rect x="6" y="2" width="2" height="2" fill="#000"/><rect x="12" y="2" width="2" height="2" fill="#000"/><rect x="14" y="2" width="2" height="2" fill="#62c6f0"/><rect x="16" y="2" width="2" height="2" fill="#fff"/><rect x="18" y="2" width="2" height="2" fill="#000"/><rect x="24" y="2" width="2" height="2" fill="#000"/><rect x="4" y="4" width="2" height="2" fill="#000"/><rect x="6" y="4" width="2" height="2" fill="#fff"/><rect x="8" y="4" width="2" height="2" fill="#000"/><rect x="12" y="4" width="2" height="2" fill="#000"/><rect x="14" y="4" width="2" height="2" fill="#62c6f0"/><rect x="16" y="4" width="2" height="2" fill="#fff"/><rect x="18" y="4" width="2" height="2" fill="#000"/><rect x="22" y="4" width="2" height="2" fill="#000"/><rect x="24" y="4" width="2" height="2" fill="#fff"/><rect x="26" y="4" width="2" height="2" fill="#000"/><rect x="2" y="6" width="2" height="2" fill="#000"/><rect x="4" y="6" width="2" height="2" fill="#fff"/><rect x="6" y="6" width="4" height="2" fill="#62c6f0"/><rect x="10" y="6" width="4" height="2" fill="#000"/><rect x="14" y="6" width="2" height="2" fill="#62c6f0"/><rect x="16" y="6" width="2" height="2" fill="#fff"/><rect x="18" y="6" width="4" height="2" fill="#000"/><rect x="22" y="6" width="6" height="2" fill="#62c6f0"/><rect x="28" y="6" width="2" height="2" fill="#000"/><rect x="4" y="8" width="2" height="2" fill="#000"/><rect x="6" y="8" width="2" height="2" fill="#fff"/><rect x="8" y="8" width="18" height="2" fill="#62c6f0"/><rect x="26" y="8" width="2" height="2" fill="#000"/><rect x="6" y="10" width="2" height="2" fill="#000"/><rect x="8" y="10" width="6" height="2" fill="#62c6f0"/><rect x="14" y="10" width="4" height="2" fill="#000"/><rect x="18" y="10" width="6" height="2" fill="#62c6f0"/><rect x="24" y="10" width="2" height="2" fill="#000"/><rect x="2" y="12" width="6" height="2" fill="#000"/><rect x="8" y="12" width="4" height="2" fill="#62c6f0"/><rect x="12" y="12" width="2" height="2" fill="#000"/><rect x="14" y="12" width="4" height="2" fill="#fff"/><rect x="18" y="12" width="2" height="2" fill="#000"/><rect x="20" y="12" width="4" height="2" fill="#62c6f0"/><rect x="24" y="12" width="6" height="2" fill="#000"/><rect x="0" y="14" width="2" height="2" fill="#000"/><rect x="2" y="14" width="4" height="2" fill="#fff"/><rect x="6" y="14" width="4" height="2" fill="#62c6f0"/><rect x="10" y="14" width="2" height="2" fill="#000"/><rect x="12" y="14" width="8" height="2" fill="#fff"/><rect x="20" y="14" width="2" height="2" fill="#000"/><rect x="22" y="14" width="8" height="2" fill="#62c6f0"/><rect x="30" y="14" width="2" height="2" fill="#000"/><rect x="0" y="16" width="2" height="2" fill="#000"/><rect x="2" y="16" width="8" height="2" fill="#62c6f0"/><rect x="10" y="16" width="2" height="2" fill="#000"/><rect x="12" y="16" width="8" height="2" fill="#fff"/><rect x="20" y="16" width="2" height="2" fill="#000"/><rect x="22" y="16" width="8" height="2" fill="#2a9fd6"/><rect x="30" y="16" width="2" height="2" fill="#000"/><rect x="2" y="18" width="6" height="2" fill="#000"/><rect x="8" y="18" width="4" height="2" fill="#62c6f0"/><rect x="12" y="18" width="2" height="2" fill="#000"/><rect x="14" y="18" width="4" height="2" fill="#fff"/><rect x="18" y="18" width="2" height="2" fill="#000"/><rect x="20" y="18" width="4" height="2" fill="#62c6f0"/><rect x="24" y="18" width="6" height="2" fill="#000"/><rect x="6" y="20" width="2" height="2" fill="#000"/><rect x="8" y="20" width="6" height="2" fill="#62c6f0"/><rect x="14" y="20" width="4" height="2" fill="#000"/><rect x="18" y="20" width="6" height="2" fill="#62c6f0"/><rect x="24" y="20" width="2" height="2" fill="#000"/><rect x="4" y="22" width="2" height="2" fill="#000"/><rect x="6" y="22" width="20" height="2" fill="#62c6f0"/><rect x="26" y="22" width="2" height="2" fill="#000"/><rect x="2" y="24" width="2" height="2" fill="#000"/><rect x="4" y="24" width="6" height="2" fill="#62c6f0"/><rect x="10" y="24" width="4" height="2" fill="#000"/><rect x="14" y="24" width="4" height="2" fill="#62c6f0"/><rect x="18" y="24" width="4" height="2" fill="#000"/><rect x="22" y="24" width="6" height="2" fill="#62c6f0"/><rect x="28" y="24" width="2" height="2" fill="#000"/><rect x="4" y="26" width="2" height="2" fill="#000"/><rect x="6" y="26" width="2" height="2" fill="#62c6f0"/><rect x="8" y="26" width="2" height="2" fill="#000"/><rect x="12" y="26" width="2" height="2" fill="#000"/><rect x="14" y="26" width="4" height="2" fill="#62c6f0"/><rect x="18" y="26" width="2" height="2" fill="#000"/><rect x="22" y="26" width="2" height="2" fill="#000"/><rect x="24" y="26" width="2" height="2" fill="#62c6f0"/><rect x="26" y="26" width="2" height="2" fill="#000"/><rect x="6" y="28" width="2" height="2" fill="#000"/><rect x="12" y="28" width="2" height="2" fill="#000"/><rect x="14" y="28" width="4" height="2" fill="#62c6f0"/><rect x="18" y="28" width="2" height="2" fill="#000"/><rect x="24" y="28" width="2" height="2" fill="#000"/><rect x="14" y="30" width="4" height="2" fill="#000"/></svg>
<svg style="position:absolute;left:1291px;top:546px" width="32" height="32" shape-rendering="crispEdges"><rect x="14" y="0" width="4" height="2" fill="#000"/><rect x="12" y="2" width="2" height="2" fill="#000"/><rect x="14" y="2" width="4" height="2" fill="#e535ab"/><rect x="18" y="2" width="2" height="2" fill="#000"/><rect x="12" y="4" width="2" height="2" fill="#000"/><rect x="14" y="4" width="4" height="2" fill="#e535ab"/><rect x="18" y="4" width="2" height="2" fill="#000"/><rect x="4" y="6" width="4" height="2" fill="#000"/><rect x="14" y="6" width="4" height="2" fill="#000"/><rect x="24" y="6" width="4" height="2" fill="#000"/><rect x="2" y="8" width="2" height="2" fill="#000"/><rect x="4" y="8" width="4" height="2" fill="#e535ab"/><rect x="8" y="8" width="6" height="2" fill="#000"/><rect x="18" y="8" width="6" height="2" fill="#000"/><rect x="24" y="8" width="4" height="2" fill="#e535ab"/><rect x="28" y="8" width="2" height="2" fill="#000"/><rect x="2" y="10" width="2" height="2" fill="#000"/><rect x="4" y="10" width="4" height="2" fill="#e535ab"/><rect x="8" y="10" width="2" height="2" fill="#000"/><rect x="10" y="10" width="4" height="2" fill="#e535ab"/><rect x="14" y="10" width="4" height="2" fill="#000"/><rect x="18" y="10" width="4" height="2" fill="#e535ab"/><rect x="22" y="10" width="2" height="2" fill="#000"/><rect x="24" y="10" width="4" height="2" fill="#e535ab"/><rect x="28" y="10" width="2" height="2" fill="#000"/><rect x="4" y="12" width="6" height="2" fill="#000"/><rect x="10" y="12" width="2" height="2" fill="#e535ab"/><rect x="12" y="12" width="2" height="2" fill="#000"/><rect x="18" y="12" width="2" height="2" fill="#000"/><rect x="20" y="12" width="2" height="2" fill="#e535ab"/><rect x="22" y="12" width="6" height="2" fill="#000"/><rect x="8" y="14" width="2" height="2" fill="#000"/><rect x="10" y="14" width="2" height="2" fill="#e535ab"/><rect x="12" y="14" width="2" height="2" fill="#000"/><rect x="18" y="14" width="2" height="2" fill="#000"/><rect x="20" y="14" width="2" height="2" fill="#e535ab"/><rect x="22" y="14" width="2" height="2" fill="#000"/><rect x="8" y="16" width="2" height="2" fill="#000"/><rect x="10" y="16" width="2" height="2" fill="#e535ab"/><rect x="12" y="16" width="2" height="2" fill="#000"/><rect x="18" y="16" width="2" height="2" fill="#000"/><rect x="20" y="16" width="2" height="2" fill="#e535ab"/><rect x="22" y="16" width="2" height="2" fill="#000"/><rect x="4" y="18" width="6" height="2" fill="#000"/><rect x="10" y="18" width="2" height="2" fill="#e535ab"/><rect x="12" y="18" width="2" height="2" fill="#000"/><rect x="18" y="18" width="2" height="2" fill="#000"/><rect x="20" y="18" width="2" height="2" fill="#e535ab"/><rect x="22" y="18" width="6" height="2" fill="#000"/><rect x="2" y="20" width="2" height="2" fill="#000"/><rect x="4" y="20" width="4" height="2" fill="#e535ab"/><rect x="8" y="20" width="2" height="2" fill="#000"/><rect x="10" y="20" width="4" height="2" fill="#e535ab"/><rect x="14" y="20" width="4" height="2" fill="#000"/><rect x="18" y="20" width="4" height="2" fill="#e535ab"/><rect x="22" y="20" width="2" height="2" fill="#000"/><rect x="24" y="20" width="4" height="2" fill="#e535ab"/><rect x="28" y="20" width="2" height="2" fill="#000"/><rect x="2" y="22" width="2" height="2" fill="#000"/><rect x="4" y="22" width="4" height="2" fill="#e535ab"/><rect x="8" y="22" width="6" height="2" fill="#000"/><rect x="18" y="22" width="6" height="2" fill="#000"/><rect x="24" y="22" width="4" height="2" fill="#e535ab"/><rect x="28" y="22" width="2" height="2" fill="#000"/><rect x="4" y="24" width="4" height="2" fill="#000"/><rect x="14" y="24" width="4" height="2" fill="#000"/><rect x="24" y="24" width="4" height="2" fill="#000"/><rect x="12" y="26" width="2" height="2" fill="#000"/><rect x="14" y="26" width="4" height="2" fill="#e535ab"/><rect x="18" y="26" width="2" height="2" fill="#000"/><rect x="12" y="28" width="2" height="2" fill="#000"/><rect x="14" y="28" width="4" height="2" fill="#e535ab"/><rect x="18" y="28" width="2" height="2" fill="#000"/><rect x="14" y="30" width="4" height="2" fill="#000"/></svg>
<svg style="position:absolute;left:1291px;top:602px" width="32" height="32" shape-rendering="crispEdges"><rect x="6" y="0" width="4" height="2" fill="#000"/><rect x="22" y="0" width="4" height="2" fill="#000"/><rect x="4" y="2" width="2" height="2" fill="#000"/><rect x="6" y="2" width="4" height="2" fill="#3d8ff2"/><rect x="10" y="2" width="2" height="2" fill="#000"/><rect x="20" y="2" width="2" height="2" fill="#000"/><rect x="22" y="2" width="4" height="2" fill="#c36ae6"/><rect x="26" y="2" width="2" height="2" fill="#000"/><rect x="2" y="4" width="2" height="2" fill="#000"/><rect x="4" y="4" width="2" height="2" fill="#3d8ff2"/><rect x="6" y="4" width="4" height="2" fill="#fff"/><rect x="10" y="4" width="2" height="2" fill="#3d8ff2"/><rect x="12" y="4" width="2" height="2" fill="#000"/><rect x="18" y="4" width="2" height="2" fill="#000"/><rect x="20" y="4" width="2" height="2" fill="#c36ae6"/><rect x="22" y="4" width="4" height="2" fill="#fff"/><rect x="26" y="4" width="2" height="2" fill="#c36ae6"/><rect x="28" y="4" width="2" height="2" fill="#000"/><rect x="2" y="6" width="2" height="2" fill="#000"/><rect x="4" y="6" width="2" height="2" fill="#3d8ff2"/><rect x="6" y="6" width="4" height="2" fill="#fff"/><rect x="10" y="6" width="2" height="2" fill="#3d8ff2"/><rect x="12" y="6" width="2" height="2" fill="#000"/><rect x="18" y="6" width="2" height="2" fill="#000"/><rect x="20" y="6" width="2" height="2" fill="#c36ae6"/><rect x="22" y="6" width="4" height="2" fill="#fff"/><rect x="26" y="6" width="2" height="2" fill="#c36ae6"/><rect x="28" y="6" width="2" height="2" fill="#000"/><rect x="4" y="8" width="2" height="2" fill="#000"/><rect x="6" y="8" width="4" height="2" fill="#3d8ff2"/><rect x="10" y="8" width="2" height="2" fill="#000"/><rect x="20" y="8" width="2" height="2" fill="#000"/><rect x="22" y="8" width="4" height="2" fill="#c36ae6"/><rect x="26" y="8" width="2" height="2" fill="#000"/><rect x="6" y="10" width="2" height="2" fill="#000"/><rect x="8" y="10" width="2" height="2" fill="#3d8ff2"/><rect x="10" y="10" width="2" height="2" fill="#000"/><rect x="20" y="10" width="2" height="2" fill="#000"/><rect x="22" y="10" width="2" height="2" fill="#dd4060"/><rect x="24" y="10" width="2" height="2" fill="#000"/><rect x="6" y="12" width="2" height="2" fill="#000"/><rect x="8" y="12" width="2" height="2" fill="#3d8ff2"/><rect x="10" y="12" width="2" height="2" fill="#000"/><rect x="20" y="12" width="2" height="2" fill="#000"/><rect x="22" y="12" width="2" height="2" fill="#dd4060"/><rect x="24" y="12" width="2" height="2" fill="#000"/><rect x="6" y="14" width="2" height="2" fill="#000"/><rect x="8" y="14" width="2" height="2" fill="#3d8ff2"/><rect x="10" y="14" width="10" height="2" fill="#000"/><rect x="20" y="14" width="4" height="2" fill="#dd4060"/><rect x="24" y="14" width="2" height="2" fill="#000"/><rect x="6" y="16" width="2" height="2" fill="#000"/><rect x="8" y="16" width="2" height="2" fill="#3d8ff2"/><rect x="10" y="16" width="2" height="2" fill="#000"/><rect x="12" y="16" width="10" height="2" fill="#dd4060"/><rect x="22" y="16" width="2" height="2" fill="#000"/><rect x="6" y="18" width="2" height="2" fill="#000"/><rect x="8" y="18" width="2" height="2" fill="#3d8ff2"/><rect x="10" y="18" width="12" height="2" fill="#000"/><rect x="6" y="20" width="2" height="2" fill="#000"/><rect x="8" y="20" width="2" height="2" fill="#3d8ff2"/><rect x="10" y="20" width="2" height="2" fill="#000"/><rect x="4" y="22" width="2" height="2" fill="#000"/><rect x="6" y="22" width="4" height="2" fill="#3d8ff2"/><rect x="10" y="22" width="2" height="2" fill="#000"/><rect x="2" y="24" width="2" height="2" fill="#000"/><rect x="4" y="24" width="2" height="2" fill="#3d8ff2"/><rect x="6" y="24" width="4" height="2" fill="#fff"/><rect x="10" y="24" width="2" height="2" fill="#3d8ff2"/><rect x="12" y="24" width="2" height="2" fill="#000"/><rect x="2" y="26" width="2" height="2" fill="#000"/><rect x="4" y="26" width="2" height="2" fill="#3d8ff2"/><rect x="6" y="26" width="4" height="2" fill="#fff"/><rect x="10" y="26" width="2" height="2" fill="#3d8ff2"/><rect x="12" y="26" width="2" height="2" fill="#000"/><rect x="4" y="28" width="2" height="2" fill="#000"/><rect x="6" y="28" width="4" height="2" fill="#3d8ff2"/><rect x="10" y="28" width="2" height="2" fill="#000"/><rect x="6" y="30" width="4" height="2" fill="#000"/></svg>
<div id="t60" class="t" style="left:1339px;top:447.85px;font-size:14px;line-height:18px;color:#2c6ecb;font-weight:400;font-family:'Liberation Sans', sans-serif;letter-spacing:-0.170px;text-decoration:underline;">Explore Storefront API scopes</div>
<div id="t61" class="t" style="left:1339px;top:500.95px;font-size:14px;line-height:18px;color:#2c6ecb;font-weight:400;font-family:'Liberation Sans', sans-serif;letter-spacing:-0.091px;text-decoration:underline;">Start using Storefront API</div>
<div id="t62" class="t" style="left:1339px;top:544.75px;font-size:14px;line-height:18px;color:#2c6ecb;font-weight:400;font-family:'Liberation Sans', sans-serif;letter-spacing:-0.035px;text-decoration:underline;">Run demo queries with</div>
<div id="t63" class="t" style="left:1339px;top:564.95px;font-size:14px;line-height:18px;color:#2c6ecb;font-weight:400;font-family:'Liberation Sans', sans-serif;letter-spacing:-0.127px;text-decoration:underline;">Shopify’s GraphiQL explorer</div>
<div id="t64" class="t" style="left:1339px;top:601.45px;font-size:14px;line-height:18px;color:#2c6ecb;font-weight:400;font-family:'Liberation Sans', sans-serif;letter-spacing:-0.107px;text-decoration:underline;">Browse sample storefront apps</div>
<div id="t65" class="t" style="left:1339px;top:620.75px;font-size:14px;line-height:18px;color:#2c6ecb;font-weight:400;font-family:'Liberation Sans', sans-serif;letter-spacing:0.044px;text-decoration:underline;">on GitHub</div>
</body></html>
